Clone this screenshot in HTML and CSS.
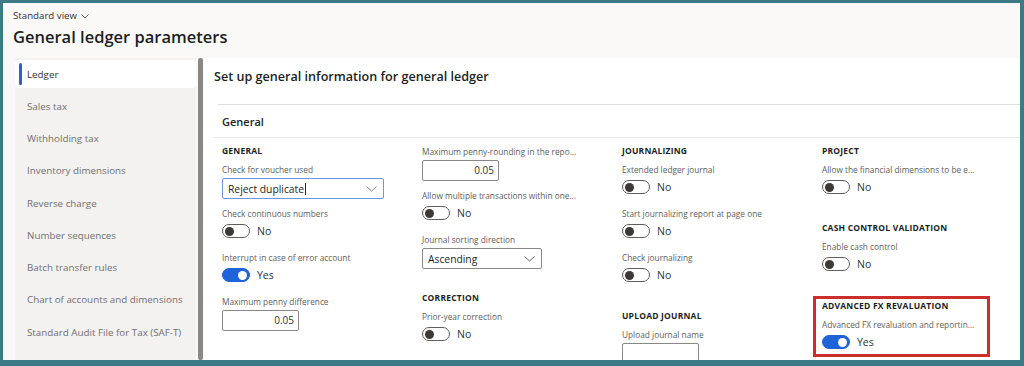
FILE: index.html
```html
<!DOCTYPE html>
<html lang="en">
<head>
<meta charset="utf-8">
<title>General ledger parameters</title>
<link rel="stylesheet" href="styles.css">
</head>
<body>
<div class="screen">
  <header class="top">
    <div class="view">Standard view
      <svg class="view-chev" width="8" height="5" viewBox="0 0 8 5"><polyline points="0.5,0.5 4,4 7.5,0.5" fill="none" stroke="#605e5c" stroke-width="1"/></svg>
    </div>
    <h1 class="title">General ledger parameters</h1>
  </header>
  <div class="body">
    <nav class="nav">
      <div class="nav-item active"><span class="bar"></span>Ledger</div>
      <div class="nav-item">Sales tax</div>
      <div class="nav-item">Withholding tax</div>
      <div class="nav-item">Inventory dimensions</div>
      <div class="nav-item">Reverse charge</div>
      <div class="nav-item">Number sequences</div>
      <div class="nav-item">Batch transfer rules</div>
      <div class="nav-item">Chart of accounts and dimensions</div>
      <div class="nav-item">Standard Audit File for Tax (SAF-T)</div>
      <div class="nav-item">Ledger settlements</div>
    </nav>
    <div class="splitter"></div>
    <main class="main">
      <h2 class="main-title">Set up general information for general ledger</h2>
      <section class="section">
        <h3 class="section-title">General</h3>
        <div class="grid">
          <div class="col">
            <div class="group">
              <div class="group-title">General</div>
              <div class="field">
                <div class="label">Check for voucher used</div>
                <div class="select focused w162"><span class="val">Reject duplicate<span class="caret"></span></span>
                  <svg width="11" height="6" viewBox="0 0 11 6"><polyline points="0.5,0.5 5.5,5 10.5,0.5" fill="none" stroke="#8a8886" stroke-width="1"/></svg>
                </div>
              </div>
              <div class="field">
                <div class="label">Check continuous numbers</div>
                <div class="toggle-row"><span class="toggle"><span class="knob"></span></span><span class="toggle-text">No</span></div>
              </div>
              <div class="field">
                <div class="label">Interrupt in case of error account</div>
                <div class="toggle-row"><span class="toggle on"><span class="knob"></span></span><span class="toggle-text">Yes</span></div>
              </div>
              <div class="field">
                <div class="label">Maximum penny difference</div>
                <div class="input">0.05</div>
              </div>
            </div>
          </div>
          <div class="col">
            <div class="group">
              <div class="field">
                <div class="label">Maximum penny-rounding in the repo...</div>
                <div class="input">0.05</div>
              </div>
              <div class="field">
                <div class="label">Allow multiple transactions within one...</div>
                <div class="toggle-row"><span class="toggle"><span class="knob"></span></span><span class="toggle-text">No</span></div>
              </div>
              <div class="field">
                <div class="label">Journal sorting direction</div>
                <div class="select w120"><span class="val">Ascending</span>
                  <svg width="11" height="6" viewBox="0 0 11 6"><polyline points="0.5,0.5 5.5,5 10.5,0.5" fill="none" stroke="#605e5c" stroke-width="1"/></svg>
                </div>
              </div>
            </div>
            <div class="group">
              <div class="group-title">Correction</div>
              <div class="field">
                <div class="label">Prior-year correction</div>
                <div class="toggle-row"><span class="toggle"><span class="knob"></span></span><span class="toggle-text">No</span></div>
              </div>
            </div>
          </div>
          <div class="col">
            <div class="group">
              <div class="group-title">Journalizing</div>
              <div class="field">
                <div class="label">Extended ledger journal</div>
                <div class="toggle-row"><span class="toggle"><span class="knob"></span></span><span class="toggle-text">No</span></div>
              </div>
              <div class="field">
                <div class="label">Start journalizing report at page one</div>
                <div class="toggle-row"><span class="toggle"><span class="knob"></span></span><span class="toggle-text">No</span></div>
              </div>
              <div class="field">
                <div class="label">Check journalizing</div>
                <div class="toggle-row"><span class="toggle"><span class="knob"></span></span><span class="toggle-text">No</span></div>
              </div>
            </div>
            <div class="group">
              <div class="group-title">Upload journal</div>
              <div class="field">
                <div class="label">Upload journal name</div>
                <div class="input tall"></div>
              </div>
            </div>
          </div>
          <div class="col">
            <div class="group">
              <div class="group-title">Project</div>
              <div class="field">
                <div class="label">Allow the financial dimensions to be e...</div>
                <div class="toggle-row"><span class="toggle"><span class="knob"></span></span><span class="toggle-text">No</span></div>
              </div>
            </div>
            <div class="group">
              <div class="group-title">Cash control validation</div>
              <div class="field">
                <div class="label">Enable cash control</div>
                <div class="toggle-row"><span class="toggle"><span class="knob"></span></span><span class="toggle-text">No</span></div>
              </div>
            </div>
            <div class="group highlight">
              <div class="group-title">Advanced FX revaluation</div>
              <div class="field compact">
                <div class="label">Advanced FX revaluation and reportin...</div>
                <div class="toggle-row"><span class="toggle on"><span class="knob"></span></span><span class="toggle-text">Yes</span></div>
              </div>
            </div>
          </div>
        </div>
      </section>
    </main>
  </div>
</div>
</body>
</html>
```

FILE: styles.css
```css
html, body {
  margin: 0;
  padding: 0;
}
body {
  width: 1024px;
  height: 366px;
  overflow: hidden;
  background: #3c7a85;
  font-family: "Open Sans", "Noto Sans", sans-serif;
}
.screen {
  margin: 3px 4px 0 3px;
  height: 357px;
  background: #faf9f8;
  overflow: hidden;
  display: flex;
  flex-direction: column;
}
.top {
  flex: none;
  height: 55px;
  box-sizing: border-box;
  padding: 6px 0 0 10px;
}
.view {
  display: flex;
  align-items: center;
  gap: 4px;
  font-size: 9.7px;
  line-height: 14px;
  color: #323130;
}
.title {
  margin: 1px 0 0;
  font-size: 16.5px;
  font-weight: 600;
  line-height: 26px;
  color: #201f1e;
}
.body {
  flex: 1;
  display: flex;
  min-height: 0;
}
.nav {
  flex: none;
  margin-left: 12px;
  width: 181px;
  padding-top: 2px;
  background: #f3f2f1;
  border-radius: 3px 0 0 0;
}
.nav-item {
  height: 28px;
  margin-bottom: 4.25px;
  display: flex;
  align-items: center;
  padding-left: 12px;
  font-size: 9.8px;
  color: #72706e;
  white-space: nowrap;
}
.nav-item.active {
  background: #fff;
  color: #323130;
  padding-left: 4px;
  border-radius: 3px;
}
.bar {
  width: 3px;
  height: 22px;
  border-radius: 2px;
  background: #2f5fd0;
  margin-right: 5px;
}
.splitter {
  flex: none;
  width: 5px;
  margin-left: 2px;
  background: #8a8886;
  border-radius: 2px;
}
.main {
  flex: 1;
  margin-left: 1px;
  background: #fff;
}
.main-title {
  margin: 0;
  height: 46px;
  box-sizing: border-box;
  padding: 9px 0 0 10px;
  font-size: 12.6px;
  font-weight: 600;
  line-height: 20px;
  color: #201f1e;
}
.section {
  margin-left: 14px;
  border-top: 1px solid #e1dfdd;
}
.section-title {
  margin: 0 0 0 -5px;
  height: 33px;
  box-sizing: border-box;
  padding: 8px 0 0 9px;
  border-bottom: 1px solid #edebe9;
  font-size: 11px;
  font-weight: 600;
  line-height: 18px;
  color: #201f1e;
}
.grid {
  display: grid;
  grid-template-columns: repeat(4, 200px);
  padding: 6px 0 0 4px;
}
.group + .group {
  margin-top: 15px;
}
.group-title {
  height: 14px;
  margin-bottom: 4px;
  font-size: 8.5px;
  font-weight: 700;
  line-height: 14px;
  letter-spacing: 0.2px;
  text-transform: uppercase;
  color: #201f1e;
}
.field {
  height: 44px;
}
.field.compact {
  height: auto;
}
.label {
  font-size: 8.3px;
  line-height: 16px;
  color: #605e5c;
  white-space: nowrap;
}
.toggle-row {
  display: flex;
  align-items: center;
  gap: 7px;
  height: 18px;
}
.toggle {
  width: 28px;
  height: 14px;
  box-sizing: border-box;
  border: 1px solid #605e5c;
  border-radius: 8px;
  background: #fff;
  display: flex;
  align-items: center;
  padding: 0 2px;
}
.knob {
  width: 9px;
  height: 9px;
  border-radius: 50%;
  background: #3b3a39;
}
.toggle.on {
  background: #1f63d9;
  border-color: #1f63d9;
  justify-content: flex-end;
}
.toggle.on .knob {
  background: #fff;
}
.toggle-text {
  font-size: 10.5px;
  color: #323130;
}
.select {
  display: flex;
  align-items: center;
  height: 21px;
  box-sizing: border-box;
  border: 1px solid #8a8886;
  border-radius: 2px;
  padding: 0 6px 0 5px;
  font-size: 10.3px;
  color: #201f1e;
}
.select.focused {
  border-color: #6f93dc;
}
.select .val {
  flex: 1;
  display: flex;
  align-items: center;
}
.caret {
  width: 1px;
  height: 12px;
  margin-left: 1px;
  background: #201f1e;
}
.w162 {
  width: 162px;
}
.w120 {
  width: 120px;
}
.input {
  width: 77px;
  height: 21px;
  box-sizing: border-box;
  border: 1px solid #8a8886;
  border-radius: 2px;
  padding-right: 4px;
  text-align: right;
  font-size: 10px;
  line-height: 19px;
  color: #323130;
}
.input.tall {
  height: 30px;
}
.group.highlight {
  margin-top: 13px;
  margin-left: -9px;
  width: 177px;
  box-sizing: border-box;
  border: 3px solid #cc2e2b;
  padding: 0 0 3px 6px;
}
```
